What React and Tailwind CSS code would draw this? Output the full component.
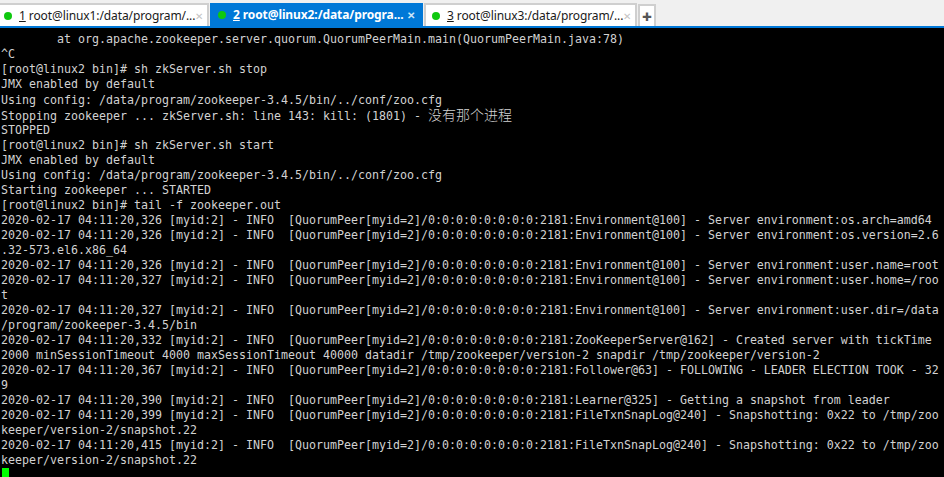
const lines = [
  "        at org.apache.zookeeper.server.quorum.QuorumPeerMain.main(QuorumPeerMain.java:78)",
  "^C",
  "[root@linux2 bin]# sh zkServer.sh stop",
  "JMX enabled by default",
  "Using config: /data/program/zookeeper-3.4.5/bin/../conf/zoo.cfg",
  <>Stopping zookeeper ... zkServer.sh: line 143: kill: (1801) - <span className="text-[14px] leading-none font-light">没有那个进程</span></>,
  "STOPPED",
  "[root@linux2 bin]# sh zkServer.sh start",
  "JMX enabled by default",
  "Using config: /data/program/zookeeper-3.4.5/bin/../conf/zoo.cfg",
  "Starting zookeeper ... STARTED",
  "[root@linux2 bin]# tail -f zookeeper.out",
  "2020-02-17 04:11:20,326 [myid:2] - INFO  [QuorumPeer[myid=2]/0:0:0:0:0:0:0:0:2181:Environment@100] - Server environment:os.arch=amd64",
  "2020-02-17 04:11:20,326 [myid:2] - INFO  [QuorumPeer[myid=2]/0:0:0:0:0:0:0:0:2181:Environment@100] - Server environment:os.version=2.6",
  ".32-573.el6.x86_64",
  "2020-02-17 04:11:20,326 [myid:2] - INFO  [QuorumPeer[myid=2]/0:0:0:0:0:0:0:0:2181:Environment@100] - Server environment:user.name=root",
  "2020-02-17 04:11:20,327 [myid:2] - INFO  [QuorumPeer[myid=2]/0:0:0:0:0:0:0:0:2181:Environment@100] - Server environment:user.home=/roo",
  "t",
  "2020-02-17 04:11:20,327 [myid:2] - INFO  [QuorumPeer[myid=2]/0:0:0:0:0:0:0:0:2181:Environment@100] - Server environment:user.dir=/data",
  "/program/zookeeper-3.4.5/bin",
  "2020-02-17 04:11:20,332 [myid:2] - INFO  [QuorumPeer[myid=2]/0:0:0:0:0:0:0:0:2181:ZooKeeperServer@162] - Created server with tickTime",
  "2000 minSessionTimeout 4000 maxSessionTimeout 40000 datadir /tmp/zookeeper/version-2 snapdir /tmp/zookeeper/version-2",
  "2020-02-17 04:11:20,367 [myid:2] - INFO  [QuorumPeer[myid=2]/0:0:0:0:0:0:0:0:2181:Follower@63] - FOLLOWING - LEADER ELECTION TOOK - 32",
  "9",
  "2020-02-17 04:11:20,390 [myid:2] - INFO  [QuorumPeer[myid=2]/0:0:0:0:0:0:0:0:2181:Learner@325] - Getting a snapshot from leader",
  "2020-02-17 04:11:20,399 [myid:2] - INFO  [QuorumPeer[myid=2]/0:0:0:0:0:0:0:0:2181:FileTxnSnapLog@240] - Snapshotting: 0x22 to /tmp/zoo",
  "keeper/version-2/snapshot.22",
  "2020-02-17 04:11:20,415 [myid:2] - INFO  [QuorumPeer[myid=2]/0:0:0:0:0:0:0:0:2181:FileTxnSnapLog@240] - Snapshotting: 0x22 to /tmp/zoo",
  "keeper/version-2/snapshot.22",
];

const Tab = ({ num, title, active, first, width }) => (
  <div
    className={`flex h-[23px] items-center justify-between ${width} ${
      active
        ? "bg-[#0078d7] pl-[8px] pr-[8px] text-white font-bold"
        : `bg-white pr-[6px] border-2 border-b-0 border-[#cfcfcf] text-[#1a1a1a] ${first ? "border-l-0 pl-[4px]" : "pl-[6px]"}`
    }`}
  >
    <span className="flex items-center whitespace-nowrap text-[12px] leading-none tracking-[-0.1px]">
      <span className="mr-[7px] h-[8px] w-[8px] shrink-0 rounded-full bg-[#0fc80f]" />
      <span className="underline">{num}</span>&nbsp;{title}
    </span>
    <span className={`text-[10px] leading-none ${active ? "text-[#cfe6f8]" : "text-[#c4c4c4]"}`}>✕</span>
  </div>
);

const App = () => (
  <div
    className="flex h-[477px] w-[944px] flex-col overflow-hidden bg-black"
    style={{ fontFamily: '"Noto Sans", "Liberation Sans", sans-serif' }}
  >
    <div className="h-[26px] shrink-0 bg-[#f0f0f0] pt-[3px]">
      <div className="flex items-start gap-[1px]">
        <Tab num="1" title="root@linux1:/data/program/..." first width="w-[209px]" />
        <Tab num="2" title="root@linux2:/data/progra..." active width="w-[213px]" />
        <Tab num="3" title="root@linux3:/data/program/..." width="w-[213px]" />
        <div className="mt-[1px] flex h-[22px] w-[18px] items-center justify-center border-2 border-b-0 border-[#cfcfcf] bg-white text-[17px] font-black leading-none text-[#555]">
          +
        </div>
      </div>
    </div>
    <div className="h-[2px] shrink-0 bg-[#0078d7]" />
    <pre
      className="flex-1 pl-[1px] pt-[4.4px] text-[11.64px] leading-[15.04px] text-[#d2d2d2]"
      style={{ fontFamily: '"DejaVu Sans Mono", "Noto Sans CJK SC", monospace' }}
    >
      {lines.map((line, i) => (
        <div key={i} className="h-[15.04px] whitespace-pre">{line}</div>
      ))}
      <div className="ml-[1px] h-[9px] w-[7px] bg-[#00ff00]" />
    </pre>
  </div>
);

export default App;
